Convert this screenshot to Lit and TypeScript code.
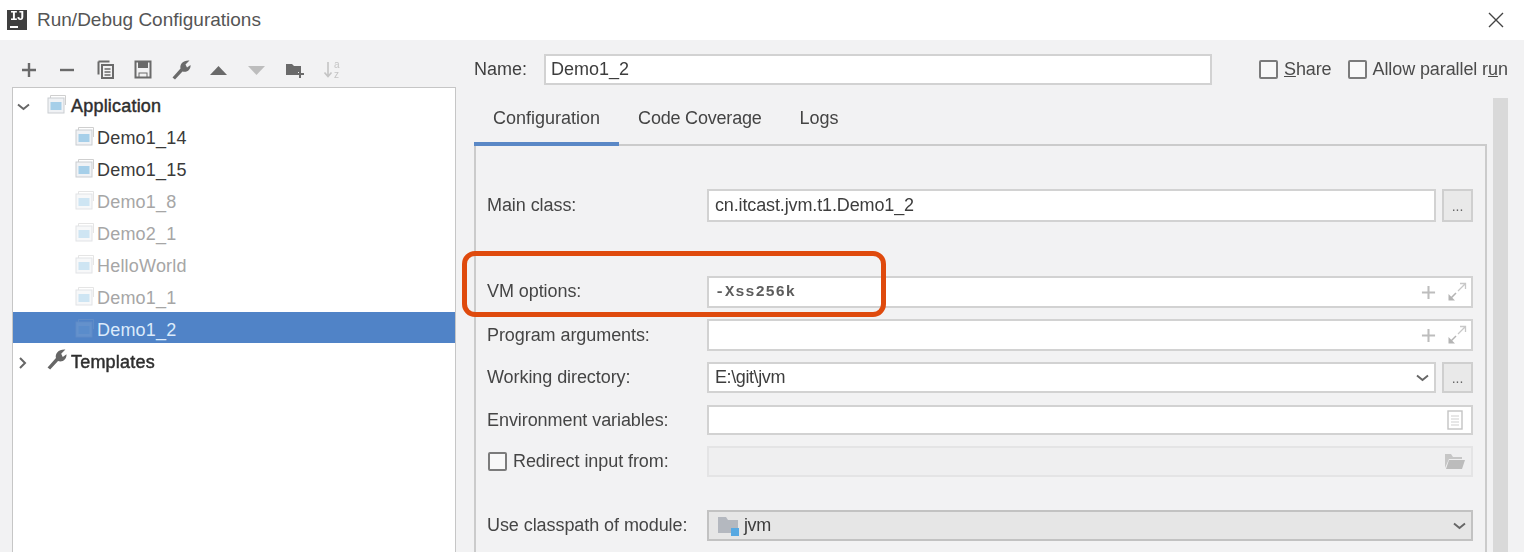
import { LitElement, html, css, svg } from 'lit';
import { customElement } from 'lit/decorators.js';

const ICON = '#6a6a6a';

// Toolbar icons above the configuration tree
const toolbarIcons = [
  svg`<path d="M9 3v14M2 10h14" stroke=${ICON} stroke-width="2.4" fill="none"/>`,
  svg`<path d="M2 10h14" stroke=${ICON} stroke-width="2.4" fill="none"/>`,
  svg`<path d="M2.5 1.5h11M2.5 1.5v13" stroke=${ICON} stroke-width="2" fill="none"/><rect x="6" y="5" width="11" height="13" fill="none" stroke=${ICON} stroke-width="2"/><path d="M8.5 9h6M8.5 12h6M8.5 15h6" stroke=${ICON} stroke-width="1.4"/>`,
  svg`<path d="M1.5 1.5h15v16h-15z" fill="none" stroke=${ICON} stroke-width="2"/><rect x="4" y="2" width="10" height="6" fill=${ICON}/><rect x="5" y="13" width="8" height="4" fill="#f2f2f2" stroke=${ICON}/>`,
  svg`<path d="M0.5 17.5 8.5 8.5C7.5 4.5 11 0 17.5 0.5L13.5 4.5 15 7.5 18.5 5C19 9.5 15 13 10.5 11.5L3 19.5Z" fill=${ICON}/>`,
  svg`<path d="M1 15 9.5 6l8.500 9z" fill=${ICON}/>`,
  svg`<path d="M1 6l8.500 9L18 6z" fill="#bdbdbd"/>`,
  svg`<path d="M1 4h6l2 2h7v6h-3v3H1z" fill=${ICON}/><path d="M15 10v8M11 14h8" stroke=${ICON} stroke-width="2"/>`,
  svg`<path d="M5 2v14M1.5 12.5 5 16.5l3.5-4" stroke="#c4c4c4" stroke-width="1.6" fill="none"/><text x="11" y="8" font-size="10" fill="#c4c4c4" font-family="Liberation Sans">a</text><text x="11" y="18" font-size="10" fill="#c4c4c4" font-family="Liberation Sans">z</text>`,
];

const appIcon = svg`
  <path d="M3.500 4V1.500h15V11" fill="none" stroke="#cfcfcf" stroke-width="1"/>
  <rect x="1" y="4" width="16" height="15" fill="#f0f2f5" stroke="#cacdd1"/>
  <rect x="3.500" y="8" width="11" height="8" fill="#a6cfe9"/>
`;

const chevron = svg`<path d="M2 3.500 7.500 8 13 3.500" fill="none" stroke="#666" stroke-width="1.900"/>`;

@customElement('app-root')
export class AppRoot extends LitElement {
  static styles = css`
    :host {
      display: block;
      position: relative;
      width: 1524px;
      height: 552px;
      overflow: hidden;
      background: #f2f2f3;
      font-family: 'Liberation Sans', Arial, sans-serif;
      font-size: 18px;
      color: #444;
    }
    .page {
      height: 552px;
      display: flex;
      flex-direction: column;
      filter: blur(0.6px);
    }
    .titlebar {
      flex: none;
      height: 40px;
      background: #fff;
      display: flex;
      align-items: center;
      padding: 0 20px 0 7px;
      gap: 10px;
    }
    .logo {
      width: 20px;
      height: 20px;
      background: #3f3f3f;
      color: #fff;
      font: bold 13px/14px 'Liberation Mono', monospace;
      letter-spacing: -1px;
      padding-left: 3px;
      box-sizing: border-box;
      position: relative;
    }
    .logo::after {
      content: '';
      position: absolute;
      left: 3px;
      bottom: 2px;
      width: 8px;
      height: 2px;
      background: #fff;
    }
    .title {
      font-size: 19px;
      color: #555;
      flex: 1;
    }
    .close {
      width: 16px;
      height: 16px;
      display: block;
    }
    .body {
      flex: 1;
      display: flex;
      min-height: 0;
    }

    /* left side */
    .left {
      flex: none;
      width: 474px;
      display: flex;
      flex-direction: column;
    }
    .toolbar {
      flex: none;
      height: 47px;
      padding: 13px 0 0 11px;
      display: flex;
      align-items: center;
      box-sizing: border-box;
    }
    .tool {
      width: 37.8px;
      display: flex;
      justify-content: center;
    }
    .tool svg {
      width: 19px;
      height: 20px;
      display: block;
    }
    .tree {
      flex: none;
      width: 444px;
      height: 480px;
      margin-left: 12px;
      box-sizing: border-box;
      background: #fff;
      border: 1px solid #c6c6c6;
      letter-spacing: 0.2px;
    }
    .row {
      height: 32px;
      box-sizing: border-box;
      padding-top: 5px;
      display: flex;
      align-items: center;
      color: #3a3a3a;
    }
    .row.child {
      padding-left: 62px;
    }
    .row.group {
      padding-left: 3px;
      color: #2e2e2e;
      -webkit-text-stroke: 0.45px #2e2e2e;
    }
    .row.off {
      color: #a6a6a6;
    }
    .row.off svg {
      opacity: 0.55;
    }
    .row.selected {
      background: #5083c7;
      color: #dcebfb;
      height: 31px;
      margin-bottom: 1px;
    }
    .row.selected svg {
      opacity: 0.12;
    }
    .row svg.win {
      width: 19px;
      height: 20px;
      margin-right: 3px;
      margin-top: -5px;
    }
    .row.group svg.win {
      width: 21px;
      margin: -5px 4px 0 0;
    }
    .row svg.arrow {
      width: 15px;
      height: 12px;
      margin-right: 15px;
    }
    .row svg.wrench {
      width: 20px;
      height: 21px;
      margin: -6px 4px 0 1px;
    }

    /* right side */
    .right {
      flex: 1;
      display: flex;
      flex-direction: column;
      min-width: 0;
    }
    .namebar {
      flex: none;
      height: 58px;
      display: flex;
      align-items: flex-start;
      padding-top: 14px;
      box-sizing: border-box;
    }
    .namebar .label {
      width: 70px;
      line-height: 30px;
      color: #3f3f3f;
      flex: none;
    }
    .check {
      flex: none;
      width: 19px;
      height: 19px;
      box-sizing: border-box;
      border: 2px solid #7b7b7b;
      border-radius: 2px;
      background: #f8f8f8;
    }
    .opt {
      display: flex;
      align-items: center;
      gap: 6px;
      height: 30px;
      color: #4b4b4b;
      letter-spacing: -0.1px;
    }
    .opt.share {
      margin-left: 47px;
    }
    .opt.parallel {
      margin-left: 16px;
    }
    .main {
      flex: 1;
      display: flex;
      min-height: 0;
    }
    .config {
      flex: none;
      width: 1013px;
      display: flex;
      flex-direction: column;
    }
    .tabs {
      flex: none;
      height: 46px;
      display: flex;
      border-bottom: 2px solid #cbcbcb;
    }
    .tab {
      padding: 0 19px;
      line-height: 41px;
      color: #444;
      position: relative;
    }
    .tab.coverage {
      letter-spacing: -0.2px;
    }
    .tab.active::after {
      content: '';
      position: absolute;
      left: 0;
      right: 0;
      bottom: -2px;
      height: 4px;
      background: #5a88c6;
    }
    .panel {
      flex: 1;
      border: solid #cbcbcb;
      border-width: 0 2px;
      padding: 43px 12px 0 11px;
      min-height: 0;
    }
    .field-row {
      display: flex;
      height: 32px;
      margin-top: 11px;
    }
    .field-row.main-class {
      height: 33px;
      margin-top: 0;
    }
    .field-row.vm {
      margin-top: 54px;
    }
    .field-row.wd {
      height: 31px;
    }
    .field-row.env {
      height: 30px;
      margin-top: 12px;
    }
    .field-row.redirect {
      height: 31px;
    }
    .field-row.module {
      height: 31px;
      margin-top: 33px;
    }
    .field-label {
      flex: none;
      width: 220px;
      display: flex;
      align-items: center;
      gap: 6px;
      color: #454545;
      letter-spacing: -0.07px;
    }
    .vm .field-label {
      padding-bottom: 2px;
      box-sizing: border-box;
    }
    .redirect .check {
      margin-left: 1px;
    }
    .field,
    .name-input {
      box-sizing: border-box;
      background: #fff;
      border: 2px solid #d2d2d2;
      display: flex;
      align-items: center;
      color: #3d3d3d;
    }
    .name-input {
      flex: none;
      width: 668px;
      height: 31px;
      padding: 0 6px 0 5px;
    }
    .field {
      flex: 1;
      min-width: 0;
      padding: 0 4px 0 6px;
    }
    .field .value {
      flex: 1;
    }
    .tight {
      letter-spacing: -0.13px;
    }
    .tighter {
      letter-spacing: -0.4px;
    }
    .field.disabled {
      background: #efeff0;
      border-color: #e4e4e5;
    }
    .field.combo {
      background: #e6e6e6;
      border-color: #c2c2c2;
    }
    .vm-text {
      font: bold 15.5px 'Liberation Mono', monospace;
      letter-spacing: 0.8px;
      color: #5d5d5d;
    }
    .more {
      flex: none;
      width: 31px;
      margin-left: 6px;
      box-sizing: border-box;
      border: 2px solid #cfcfcf;
      background: #e9e9e9;
      color: #666;
      font-size: 14px;
      display: flex;
      align-items: center;
      justify-content: center;
    }
    .ficons {
      display: flex;
      align-items: center;
      gap: 11px;
    }
    .ficons svg {
      display: block;
    }
    .note-icon {
      margin-right: 4px;
    }
    .folder-icon {
      margin-right: 1px;
    }
    .module-icon {
      width: 22px;
      height: 21px;
      margin: 0 5px 0 2px;
    }
    .scrollbar {
      flex: none;
      width: 15px;
      margin-left: 6px;
      background: #d9d9d9;
    }
    .u {
      text-decoration: underline;
    }

    /* callout drawn over the screenshot */
    .callout {
      position: absolute;
      left: 462px;
      top: 251px;
      width: 424px;
      height: 66px;
      box-sizing: border-box;
      border: 5px solid #df4a0d;
      border-radius: 13px;
      pointer-events: none;
    }
  `;

  private child(name: string, kind = '') {
    return html`<div class="row child ${kind}">
      <svg class="win" viewBox="0 0 19 20">${appIcon}</svg>${name}
    </div>`;
  }

  private plusExpand() {
    return html`<span class="ficons">
      <svg width="15" height="15" viewBox="0 0 16 16">
        <path d="M8 1v14M1 8h14" stroke="#bdbdbd" stroke-width="2.200" />
      </svg>
      <svg width="20" height="20" viewBox="0 0 20 20">
        <path d="M11 9l7-7M13 1.500h5.500V7" stroke="#c8c8c8" stroke-width="1.300" fill="none" />
        <path d="M9 11l-6 6" stroke="#b4b4b4" stroke-width="1.500" />
        <path d="M1.500 12v6.500H8z" fill="#b4b4b4" />
      </svg>
    </span>`;
  }

  render() {
    return html`
      <div class="page">
        <div class="titlebar">
          <div class="logo">IJ</div>
          <div class="title">Run/Debug Configurations</div>
          <svg class="close" viewBox="0 0 16 16">
            <path d="M1 1l14 14M15 1 1 15" stroke="#444" stroke-width="1.400" />
          </svg>
        </div>
        <div class="body">
          <div class="left">
            <div class="toolbar">
              ${toolbarIcons.map(
                (i) => html`<span class="tool"><svg viewBox="0 0 19 20">${i}</svg></span>`
              )}
            </div>
            <div class="tree">
              <div class="row group">
                <svg class="arrow" viewBox="0 0 15 12">${chevron}</svg>
                <svg class="win" viewBox="0 0 19 20">${appIcon}</svg>Application
              </div>
              ${this.child('Demo1_14')} ${this.child('Demo1_15')}
              ${this.child('Demo1_8', 'off')} ${this.child('Demo2_1', 'off')}
              ${this.child('HelloWorld', 'off')} ${this.child('Demo1_1', 'off')}
              ${this.child('Demo1_2', 'selected')}
              <div class="row group">
                <svg class="arrow" viewBox="0 0 15 12">
                  <path d="M4 1l5 5-5 5" fill="none" stroke="#666" stroke-width="2" />
                </svg>
                <svg class="wrench" viewBox="0 0 19 20">
                  <path d="M0.500 17.500 8.500 8.500C7.500 4.500 11 0 17.500 0.500L13.500 4.500 15 7.500 18.500 5C19 9.500 15 13 10.500 11.500L3 19.500Z" fill="#666" />
                </svg>Templates
              </div>
            </div>
          </div>
          <div class="right">
            <div class="namebar">
              <span class="label">Name:</span>
              <div class="name-input">Demo1_2</div>
              <label class="opt share"><span class="check"></span><span><span class="u">S</span>hare</span></label>
              <label class="opt parallel"><span class="check"></span><span>Allow parallel r<span class="u">u</span>n</span></label>
            </div>
            <div class="main">
              <div class="config">
                <div class="tabs">
                  <div class="tab active">Configuration</div>
                  <div class="tab coverage">Code Coverage</div>
                  <div class="tab">Logs</div>
                </div>
                <div class="panel">
                  <div class="field-row main-class">
                    <div class="field-label">Main class:</div>
                    <div class="field tight">cn.itcast.jvm.t1.Demo1_2</div>
                    <div class="more">...</div>
                  </div>
                  <div class="field-row vm">
                    <div class="field-label">VM options:</div>
                    <div class="field">
                      <span class="value vm-text">-Xss256k</span>${this.plusExpand()}
                    </div>
                  </div>
                  <div class="field-row">
                    <div class="field-label">Program arguments:</div>
                    <div class="field"><span class="value"></span>${this.plusExpand()}</div>
                  </div>
                  <div class="field-row wd">
                    <div class="field-label">Working directory:</div>
                    <div class="field">
                      <span class="value tighter">E:\\git\\jvm</span>
                      <svg width="15" height="12" viewBox="0 0 15 12">${chevron}</svg>
                    </div>
                    <div class="more">...</div>
                  </div>
                  <div class="field-row env">
                    <div class="field-label">Environment variables:</div>
                    <div class="field">
                      <span class="value"></span>
                      <svg class="note-icon" width="16" height="20" viewBox="0 0 16 20">
                        <rect x="1" y="1" width="14" height="18" fill="#fff" stroke="#c4c4c4" stroke-width="1.400" />
                        <path d="M4 6h8M4 9h8M4 12h8M4 15h8" stroke="#cfcfcf" />
                      </svg>
                    </div>
                  </div>
                  <div class="field-row redirect">
                    <div class="field-label"><span class="check"></span>Redirect input from:</div>
                    <div class="field disabled">
                      <span class="value"></span>
                      <svg class="folder-icon" width="22" height="17" viewBox="0 0 22 17">
                        <path d="M1 1h6l2 3h9v2H5L1 15z" fill="#c6c6c6" />
                        <path d="M5 7h16l-3 9H2z" fill="#bcbcbc" />
                      </svg>
                    </div>
                  </div>
                  <div class="field-row module">
                    <div class="field-label">Use classpath of module:</div>
                    <div class="field combo">
                      <svg class="module-icon" viewBox="0 0 22 21">
                        <path d="M1 2h8l2 3h10v9H1z" fill="#b4b8bf" />
                        <path d="M1 5h20v13H1z" fill="#b4b8bf" />
                        <rect x="14" y="13" width="8" height="8" fill="#58a9e2" />
                      </svg>
                      <span class="value tighter">jvm</span>
                      <svg width="15" height="12" viewBox="0 0 15 12">${chevron}</svg>
                    </div>
                  </div>
                </div>
              </div>
              <div class="scrollbar"></div>
            </div>
          </div>
        </div>
      </div>
      <div class="callout"></div>
    `;
  }
}
